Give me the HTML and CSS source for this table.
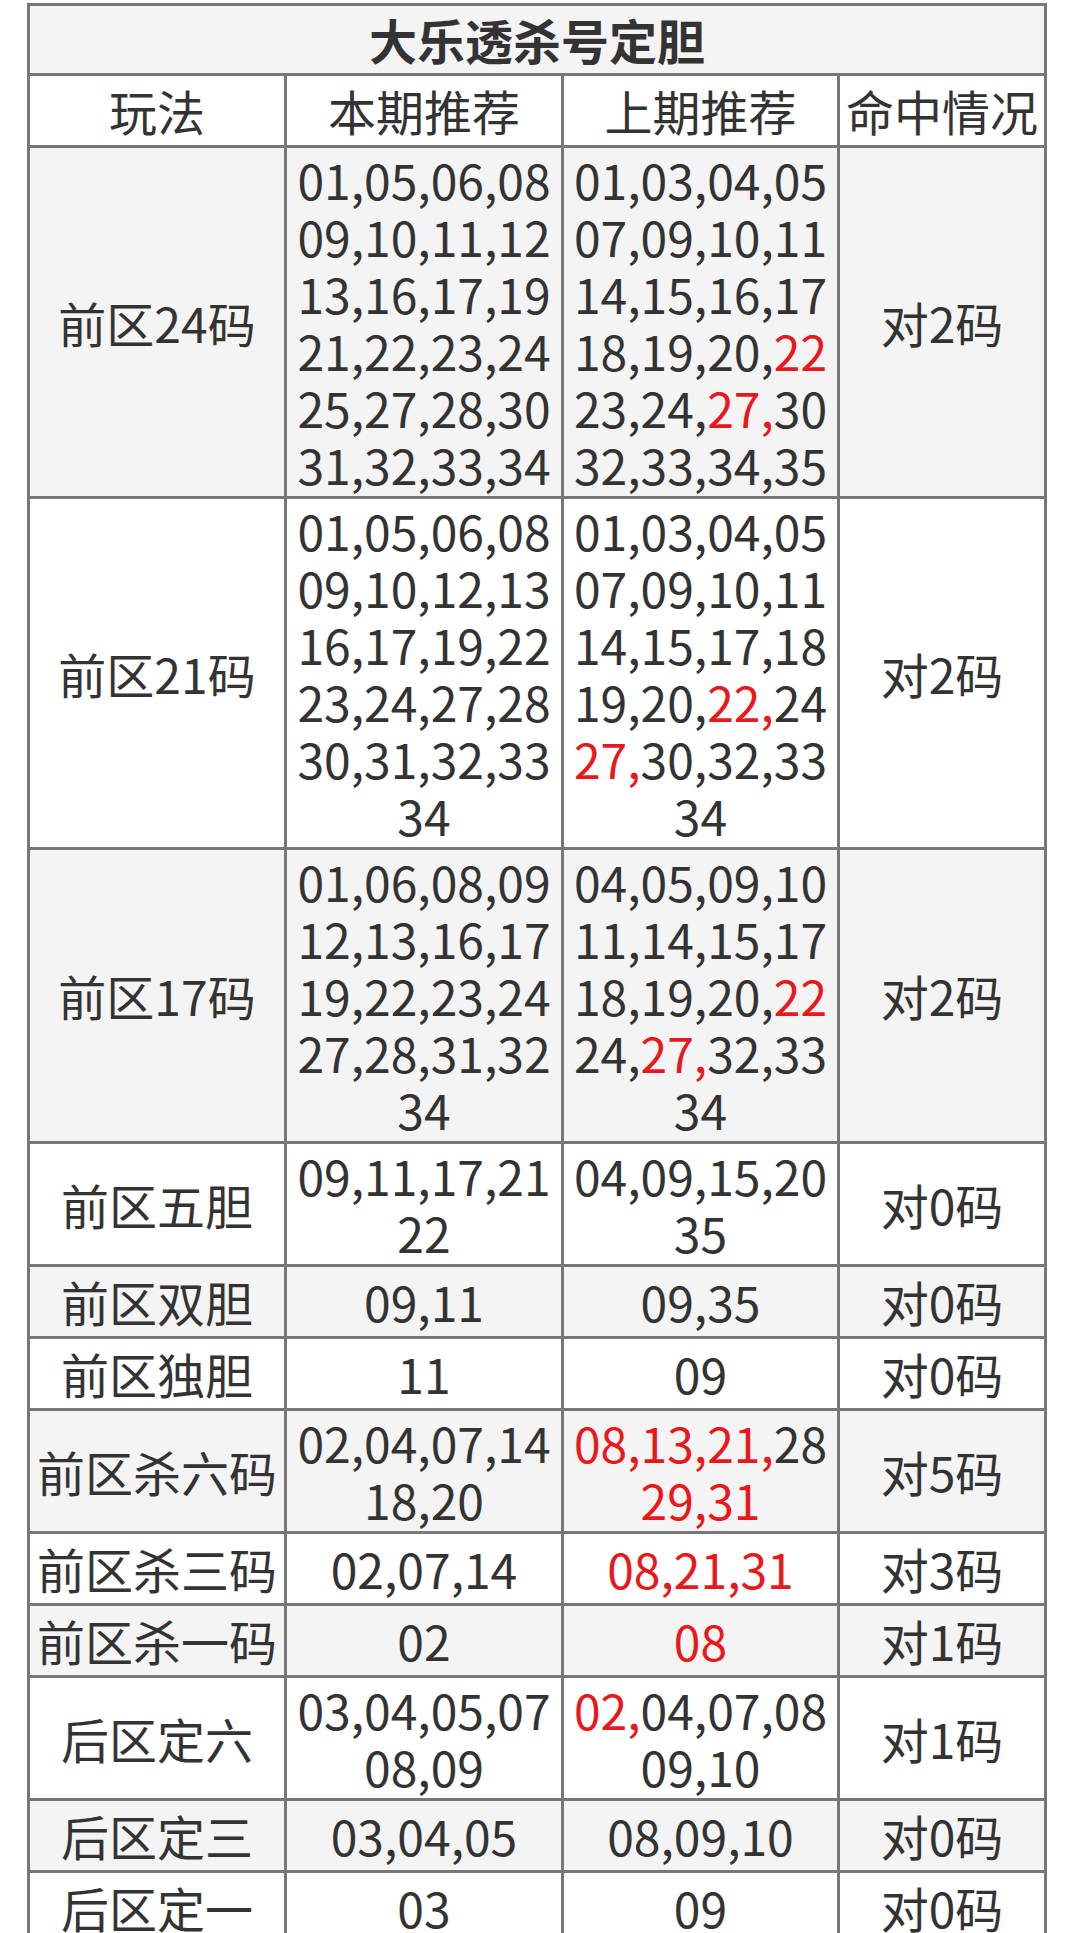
FILE: index.html
```html
<!DOCTYPE html>
<html lang="zh-CN">
<head>
<meta charset="utf-8">
<title>大乐透杀号定胆</title>
<link rel="stylesheet" href="styles.css">
</head>
<body>
<table class="kill-table">
  <colgroup>
    <col class="col-play">
    <col class="col-now">
    <col class="col-prev">
    <col class="col-hit">
  </colgroup>
  <thead>
    <tr class="title-row"><th colspan="4" class="title">大乐透杀号定胆</th></tr>
    <tr class="head-row">
      <th class="lbl">玩法</th>
      <th class="lbl">本期推荐</th>
      <th class="lbl">上期推荐</th>
      <th class="lbl">命中情况</th>
    </tr>
  </thead>
  <tbody>
    <tr>
      <td class="lbl">前区24码</td>
      <td class="num">01,05,06,08<br>09,10,11,12<br>13,16,17,19<br>21,22,23,24<br>25,27,28,30<br>31,32,33,34</td>
      <td class="num">01,03,04,05<br>07,09,10,11<br>14,15,16,17<br>18,19,20,<span class="hit">22</span><br>23,24,<span class="hit">27,</span>30<br>32,33,34,35</td>
      <td class="lbl">对2码</td>
    </tr>
    <tr>
      <td class="lbl">前区21码</td>
      <td class="num">01,05,06,08<br>09,10,12,13<br>16,17,19,22<br>23,24,27,28<br>30,31,32,33<br>34</td>
      <td class="num">01,03,04,05<br>07,09,10,11<br>14,15,17,18<br>19,20,<span class="hit">22,</span>24<br><span class="hit">27,</span>30,32,33<br>34</td>
      <td class="lbl">对2码</td>
    </tr>
    <tr>
      <td class="lbl">前区17码</td>
      <td class="num">01,06,08,09<br>12,13,16,17<br>19,22,23,24<br>27,28,31,32<br>34</td>
      <td class="num">04,05,09,10<br>11,14,15,17<br>18,19,20,<span class="hit">22</span><br>24,<span class="hit">27,</span>32,33<br>34</td>
      <td class="lbl">对2码</td>
    </tr>
    <tr>
      <td class="lbl">前区五胆</td>
      <td class="num">09,11,17,21<br>22</td>
      <td class="num">04,09,15,20<br>35</td>
      <td class="lbl">对0码</td>
    </tr>
    <tr>
      <td class="lbl">前区双胆</td>
      <td class="num">09,11</td>
      <td class="num">09,35</td>
      <td class="lbl">对0码</td>
    </tr>
    <tr>
      <td class="lbl">前区独胆</td>
      <td class="num">11</td>
      <td class="num">09</td>
      <td class="lbl">对0码</td>
    </tr>
    <tr>
      <td class="lbl">前区杀六码</td>
      <td class="num">02,04,07,14<br>18,20</td>
      <td class="num"><span class="hit">08,13,21,</span>28<br><span class="hit">29,31</span></td>
      <td class="lbl">对5码</td>
    </tr>
    <tr>
      <td class="lbl">前区杀三码</td>
      <td class="num">02,07,14</td>
      <td class="num"><span class="hit">08,21,31</span></td>
      <td class="lbl">对3码</td>
    </tr>
    <tr>
      <td class="lbl">前区杀一码</td>
      <td class="num">02</td>
      <td class="num"><span class="hit">08</span></td>
      <td class="lbl">对1码</td>
    </tr>
    <tr>
      <td class="lbl">后区定六</td>
      <td class="num">03,04,05,07<br>08,09</td>
      <td class="num"><span class="hit">02,</span>04,07,08<br>09,10</td>
      <td class="lbl">对1码</td>
    </tr>
    <tr>
      <td class="lbl">后区定三</td>
      <td class="num">03,04,05</td>
      <td class="num">08,09,10</td>
      <td class="lbl">对0码</td>
    </tr>
    <tr>
      <td class="lbl">后区定一</td>
      <td class="num">03</td>
      <td class="num">09</td>
      <td class="lbl">对0码</td>
    </tr>
  </tbody>
</table>
</body>
</html>
```

FILE: styles.css
```css
html, body {
  margin: 0;
  padding: 0;
  background: #ffffff;
}

body {
  font-family: "Noto Sans CJK SC", "Noto Sans", sans-serif;
  color: #333333;
  font-size: 48px;
}

.kill-table {
  margin: 3px 0 0 27px;
  border-spacing: 0;
  table-layout: fixed;
  width: 1020px;
  border-top: 3px solid #777777;
  border-left: 3px solid #777777;
}

.col-play { width: 257px; }
.col-now  { width: 277px; }
.col-prev { width: 276px; }
.col-hit  { width: 207px; }

.kill-table th,
.kill-table td {
  border-right: 3px solid #777777;
  border-bottom: 3px solid #777777;
  text-align: center;
  vertical-align: middle;
  padding: 3px 2px;
  font-weight: normal;
  white-space: nowrap;
}

.kill-table .title {
  font-weight: bold;
  line-height: 63px;
  padding: 2px 2px;
  background: #f4f4f4;
}

.kill-table .lbl {
  line-height: 63px;
}

.kill-table .num {
  line-height: 57px;
}

.head-row {
  background: #ffffff;
}

.kill-table tbody tr:nth-child(odd) {
  background: #f4f4f4;
}

.kill-table tbody tr:nth-child(even) {
  background: #ffffff;
}

.hit {
  color: #e8191c;
}
```
